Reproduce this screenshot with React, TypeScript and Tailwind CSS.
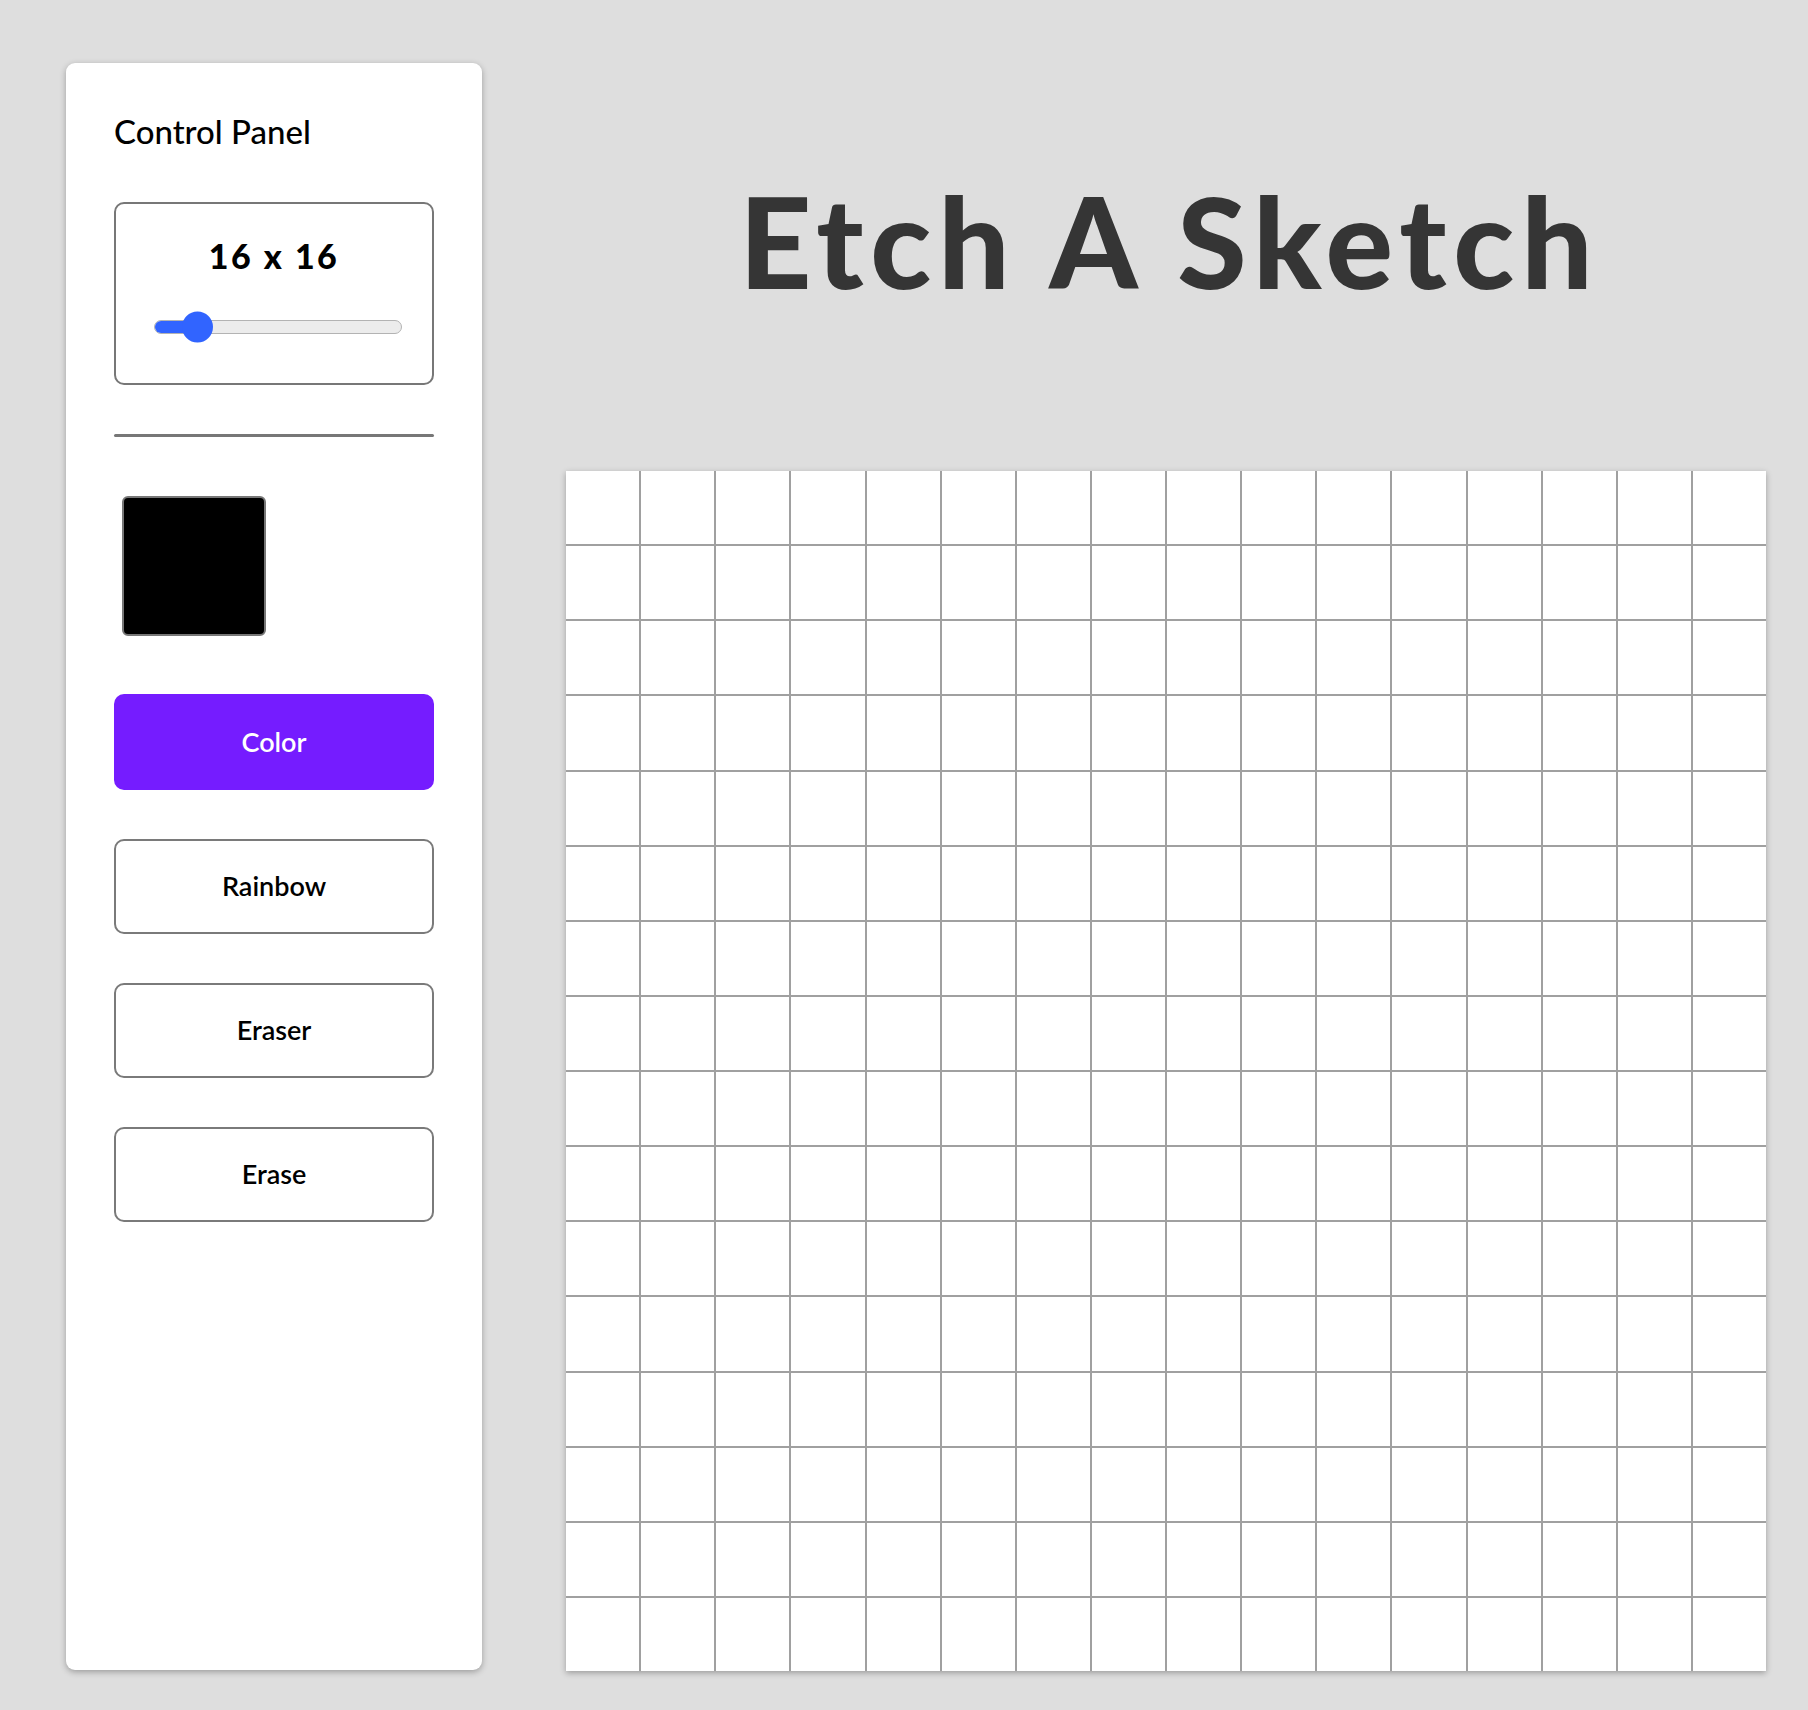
import { useState } from "react";

const SIZE = 16;
const MODES = ["Color", "Rainbow", "Eraser", "Erase"];

function ModeButton({ label, active, onClick }: { label: string; active: boolean; onClick: () => void }) {
  return (
    <button
      onClick={onClick}
      className={
        active
          ? "flex h-[96px] w-full items-center justify-center rounded-[10px] bg-[#751cff] text-[27px] font-semibold text-white"
          : "flex h-[95px] w-full items-center justify-center rounded-[10px] border-2 border-[#7a7a7a] bg-white text-[27px] font-semibold text-black"
      }
    >
      {label}
    </button>
  );
}

export default function App() {
  const [mode, setMode] = useState("Color");
  const cells = Array.from({ length: SIZE * SIZE }, (_, i) => i);

  return (
    <div className="flex min-h-screen gap-[84px] bg-[#dedede] pl-[66px] pt-[63px] font-['Lato','Noto_Sans',sans-serif]">
      {/* side panel */}
      <aside className="flex h-[1607px] w-[416px] shrink-0 flex-col rounded-[9px] bg-white px-12 pt-[52px] shadow-[0_2px_6px_rgba(0,0,0,0.3)]">
        <h2 className="text-[33px] font-medium leading-none text-black">Control Panel</h2>

        <div className="mt-[54px] flex h-[183px] flex-col items-center rounded-[10px] border-2 border-[#777] pt-[35px]">
          <div className="text-[34px] font-black leading-none tracking-[2.5px] text-black">
            {SIZE} x {SIZE}
          </div>
          <div className="ml-[7px] mt-[38px] flex h-[31px] w-[248px] items-center">
            <div className="relative h-[14px] w-full rounded-full border border-[#b3b3b3] bg-[#ececec]">
              <div className="h-full w-[44px] rounded-l-full bg-[#3164ff]" />
              <div className="absolute left-[27px] top-1/2 h-[31px] w-[31px] -translate-y-1/2 rounded-full bg-[#3164ff]" />
            </div>
          </div>
        </div>

        <div className="mt-[49px] h-[3px] rounded-full bg-[#777]" />

        <div className="ml-2 mt-[59px] h-[140px] w-[144px] rounded-md border-2 border-[#777] bg-black" />

        <div className="mt-[58px] flex flex-col gap-[49px]">
          {MODES.map((m) => (
            <ModeButton key={m} label={m} active={mode === m} onClick={() => setMode(m)} />
          ))}
        </div>
      </aside>

      {/* board */}
      <main className="flex w-[1200px] shrink-0 flex-col items-center">
        <h1 className="mt-[115px] pl-[7px] text-[126px] font-black leading-none tracking-[7px] text-[#353535]">
          Etch A Sketch
        </h1>
        <div className="mt-[167px] grid h-[1200px] w-[1200px] grid-cols-16 gap-[2px] bg-[#a0a0a0] shadow-[0_2px_6px_rgba(0,0,0,0.3)]">
          {cells.map((i) => (
            <div key={i} className="bg-white" />
          ))}
        </div>
      </main>
    </div>
  );
}
